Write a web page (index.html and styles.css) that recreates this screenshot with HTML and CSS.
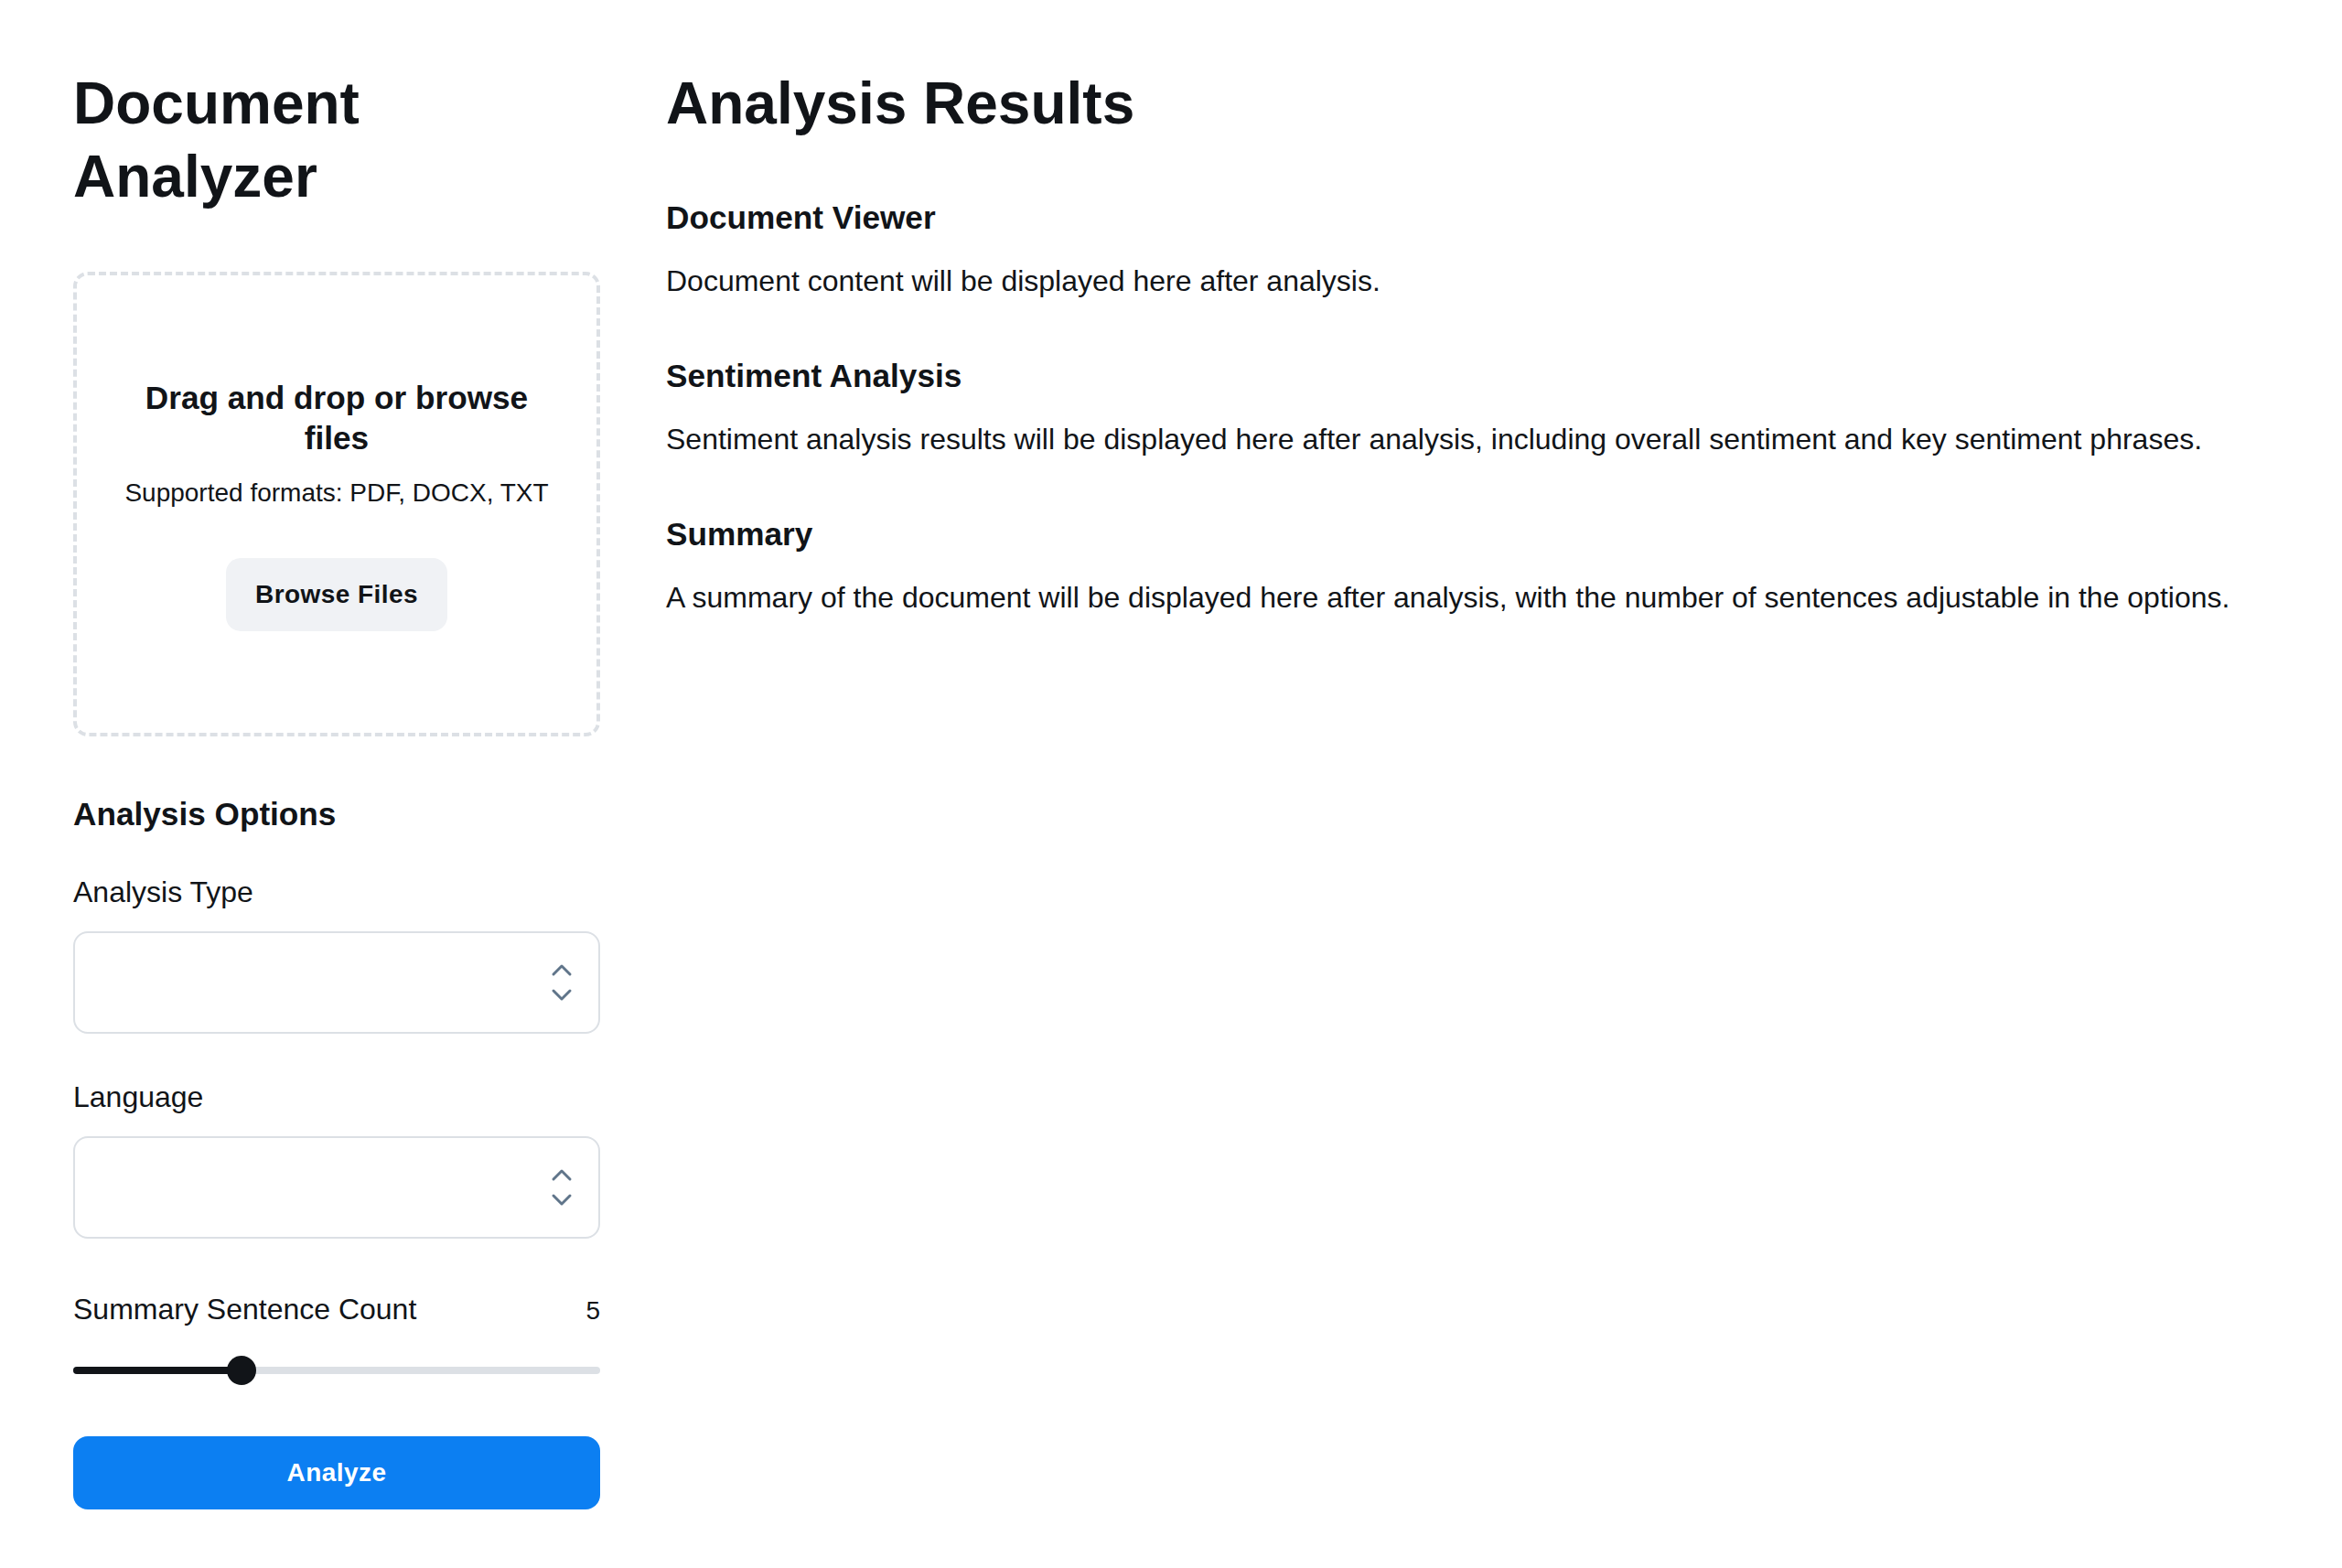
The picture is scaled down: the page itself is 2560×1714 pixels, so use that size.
FILE: index.html
```html
<!DOCTYPE html>
<html lang="en">
<head>
<meta charset="utf-8">
<title>Document Analyzer</title>
<link rel="stylesheet" href="styles.css">
</head>
<body>
<div class="page">
  <aside class="sidebar">
    <h1 class="page-title">Document Analyzer</h1>

    <div class="dropzone">
      <h3 class="drop-title">Drag and drop or browse files</h3>
      <p class="drop-sub">Supported formats: PDF, DOCX, TXT</p>
      <button class="btn-secondary" type="button">Browse Files</button>
    </div>

    <h3 class="options-title">Analysis Options</h3>

    <div class="field">
      <div class="field-label">Analysis Type</div>
      <div class="select" role="combobox" aria-label="Analysis Type">
        <svg class="select-icon" viewBox="0 0 256 256" width="48" height="48" aria-hidden="true">
          <path fill="#60758a" d="M181.66,170.34a8,8,0,0,1,0,11.32l-48,48a8,8,0,0,1-11.32,0l-48-48a8,8,0,0,1,11.32-11.32L128,212.69l42.34-42.35A8,8,0,0,1,181.66,170.34Zm-96-84.68L128,43.31l42.34,42.35a8,8,0,0,0,11.32-11.32l-48-48a8,8,0,0,0-11.32,0l-48,48A8,8,0,0,0,85.66,85.66Z"/>
        </svg>
      </div>
    </div>

    <div class="field field-next">
      <div class="field-label">Language</div>
      <div class="select" role="combobox" aria-label="Language">
        <svg class="select-icon" viewBox="0 0 256 256" width="48" height="48" aria-hidden="true">
          <path fill="#60758a" d="M181.66,170.34a8,8,0,0,1,0,11.32l-48,48a8,8,0,0,1-11.32,0l-48-48a8,8,0,0,1,11.32-11.32L128,212.69l42.34-42.35A8,8,0,0,1,181.66,170.34Zm-96-84.68L128,43.31l42.34,42.35a8,8,0,0,0,11.32-11.32l-48-48a8,8,0,0,0-11.32,0l-48,48A8,8,0,0,0,85.66,85.66Z"/>
        </svg>
      </div>
    </div>

    <div class="slider-head">
      <span class="field-label-inline">Summary Sentence Count</span>
      <span class="slider-value">5</span>
    </div>
    <div class="slider">
      <div class="track">
        <div class="fill" style="width:184px"></div>
        <div class="thumb" style="left:168px"></div>
      </div>
    </div>

    <button class="btn-primary" type="button">Analyze</button>
  </aside>

  <main class="main">
    <h1 class="page-title results-title">Analysis Results</h1>

    <section class="result">
      <h3 class="result-title">Document Viewer</h3>
      <p class="result-text">Document content will be displayed here after analysis.</p>
    </section>

    <section class="result">
      <h3 class="result-title">Sentiment Analysis</h3>
      <p class="result-text">Sentiment analysis results will be displayed here after analysis, including overall sentiment and key sentiment phrases.</p>
    </section>

    <section class="result">
      <h3 class="result-title">Summary</h3>
      <p class="result-text">A summary of the document will be displayed here after analysis, with the number of sentences adjustable in the options.</p>
    </section>
  </main>
</div>
</body>
</html>
```

FILE: styles.css
```css
* {
  box-sizing: border-box;
}

html, body {
  margin: 0;
  padding: 0;
  background: #ffffff;
}

body {
  font-family: "Liberation Sans", Arial, sans-serif;
  color: #111418;
}

.page {
  display: flex;
  align-items: flex-start;
  gap: 72px;
  padding: 73px 80px 0 80px;
  min-height: 1714px;
}

.sidebar {
  flex: 0 0 576px;
  width: 576px;
  display: flex;
  flex-direction: column;
}

.main {
  flex: 1 1 auto;
  min-width: 0;
}

.page-title {
  margin: 0;
  font-size: 64px;
  line-height: 80px;
  font-weight: 700;
  color: #111418;
}

.sidebar .page-title {
  margin-bottom: 64px;
}

/* Drop zone */
.dropzone {
  display: flex;
  flex-direction: column;
  align-items: center;
  text-align: center;
  border: 4px dashed #dce0e5;
  border-radius: 16px;
  padding: 112px 48px 111px 48px;
}

.drop-title {
  margin: 0 0 18px 0;
  font-size: 35.2px;
  line-height: 44px;
  font-weight: 700;
}

.drop-sub {
  margin: 0 0 51px 0;
  font-size: 28px;
  line-height: 40px;
  font-weight: 400;
}

.btn-secondary {
  height: 80px;
  padding: 0 32px;
  border: none;
  border-radius: 16px;
  background: #f0f2f5;
  color: #111418;
  font-family: "Liberation Sans", Arial, sans-serif;
  font-size: 28px;
  font-weight: 700;
  line-height: 40px;
  letter-spacing: 0.015em;
}

/* Options */
.options-title {
  margin: 63px 0 39px 0;
  font-size: 35.2px;
  line-height: 44px;
  font-weight: 700;
}

.field {
  display: flex;
  flex-direction: column;
}

.field-next {
  margin-top: 45px;
}

.field-label {
  font-size: 32px;
  line-height: 48px;
  margin-bottom: 19px;
}

.select {
  height: 112px;
  border: 2px solid #dce0e5;
  border-radius: 16px;
  background: #ffffff;
  display: flex;
  align-items: center;
  justify-content: flex-end;
  padding-right: 16px;
}

.select-icon {
  display: block;
  width: 48px;
  height: 48px;
}

.slider-head {
  margin-top: 53px;
  display: flex;
  justify-content: space-between;
  align-items: baseline;
}

.field-label-inline {
  font-size: 32px;
  line-height: 48px;
}

.slider-value {
  font-size: 28px;
  line-height: 40px;
}

.slider {
  margin-top: 27px;
  height: 32px;
  display: flex;
  align-items: center;
}

.track {
  position: relative;
  width: 100%;
  height: 8px;
  border-radius: 4px;
  background: #dce0e5;
}

.fill {
  height: 8px;
  border-radius: 4px;
  background: #111418;
}

.thumb {
  position: absolute;
  top: -12px;
  width: 32px;
  height: 32px;
  border-radius: 50%;
  background: #111418;
}

.btn-primary {
  margin-top: 56px;
  width: 100%;
  height: 80px;
  border: none;
  border-radius: 16px;
  background: #0c7ff2;
  color: #ffffff;
  font-family: "Liberation Sans", Arial, sans-serif;
  font-size: 28px;
  font-weight: 700;
  line-height: 40px;
  letter-spacing: 0.015em;
}

/* Results */
.results-title {
  margin-bottom: 63px;
}

.result + .result {
  margin-top: 58px;
}

.result-title {
  margin: 0 0 23px 0;
  font-size: 35.2px;
  line-height: 44px;
  font-weight: 700;
}

.result-text {
  margin: 0;
  font-size: 32px;
  line-height: 48px;
  font-weight: 400;
}
```
